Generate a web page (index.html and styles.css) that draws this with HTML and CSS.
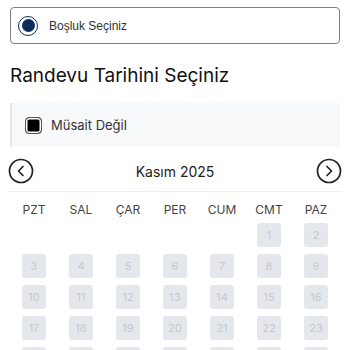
FILE: index.html
```html
<!DOCTYPE html>
<html lang="tr">
<head>
<meta charset="utf-8">
<link rel="stylesheet" href="styles.css">
</head>
<body>
<div class="page">
  <label class="slot-box">
    <span class="radio"><span class="radio-dot"></span></span>
    <span class="slot-text">Boşluk Seçiniz</span>
  </label>
  <h2 class="title">Randevu Tarihini Seçiniz</h2>
  <div class="legend">
    <span class="check"></span>
    <span class="legend-text">Müsait Değil</span>
  </div>
  <div class="cal-head">
    <span class="nav"><svg width="26" height="26" viewBox="0 0 26 26"><circle cx="13" cy="13" r="11.5" fill="none" stroke="#222" stroke-width="1.7"/><path d="M15 8.5 L10.5 13 L15 17.5" fill="none" stroke="#222" stroke-width="1.7" stroke-linecap="round" stroke-linejoin="round"/></svg></span>
    <span class="month">Kasım 2025</span>
    <span class="nav"><svg width="26" height="26" viewBox="0 0 26 26"><circle cx="13" cy="13" r="11.5" fill="none" stroke="#222" stroke-width="1.7"/><path d="M11 8.5 L15.5 13 L11 17.5" fill="none" stroke="#222" stroke-width="1.7" stroke-linecap="round" stroke-linejoin="round"/></svg></span>
  </div>
  <div class="grid">
    <div class="dn">PZT</div><div class="dn">SAL</div><div class="dn">ÇAR</div><div class="dn">PER</div><div class="dn">CUM</div><div class="dn">CMT</div><div class="dn">PAZ</div>
    <div class="cell empty"></div><div class="cell empty"></div><div class="cell empty"></div><div class="cell empty"></div><div class="cell empty"></div>
    <div class="cell"><span class="day">1</span></div><div class="cell"><span class="day">2</span></div>
    <div class="cell"><span class="day">3</span></div><div class="cell"><span class="day">4</span></div><div class="cell"><span class="day">5</span></div><div class="cell"><span class="day">6</span></div><div class="cell"><span class="day">7</span></div><div class="cell"><span class="day">8</span></div><div class="cell"><span class="day">9</span></div>
    <div class="cell"><span class="day">10</span></div><div class="cell"><span class="day">11</span></div><div class="cell"><span class="day">12</span></div><div class="cell"><span class="day">13</span></div><div class="cell"><span class="day">14</span></div><div class="cell"><span class="day">15</span></div><div class="cell"><span class="day">16</span></div>
    <div class="cell"><span class="day">17</span></div><div class="cell"><span class="day">18</span></div><div class="cell"><span class="day">19</span></div><div class="cell"><span class="day">20</span></div><div class="cell"><span class="day">21</span></div><div class="cell"><span class="day">22</span></div><div class="cell"><span class="day">23</span></div>
    <div class="cell"><span class="day">24</span></div><div class="cell"><span class="day">25</span></div><div class="cell"><span class="day">26</span></div><div class="cell"><span class="day">27</span></div><div class="cell"><span class="day">28</span></div><div class="cell"><span class="day">29</span></div><div class="cell"><span class="day">30</span></div>
  </div>
</div>
</body>
</html>
```

FILE: styles.css
```css
html, body {
  margin: 0;
  padding: 0;
  background: #ffffff;
}
.page {
  padding: 7px 10px 0 10px;
  font-family: Inter, "Liberation Sans", sans-serif;
  color: #222;
}
.slot-box {
  display: flex;
  align-items: center;
  height: 37px;
  box-sizing: border-box;
  border: 1px solid #7b8088;
  border-radius: 4px;
  padding-left: 7px;
}
.radio {
  width: 20px;
  height: 20px;
  box-sizing: border-box;
  border: 1.5px solid #0b2e5a;
  border-radius: 50%;
  display: flex;
  align-items: center;
  justify-content: center;
}
.radio-dot {
  width: 13px;
  height: 13px;
  border-radius: 50%;
  background: #0b2e5a;
}
.slot-text {
  margin-left: 11px;
  font-family: "Liberation Sans", Arial, sans-serif;
  font-size: 12px;
  color: #333;
}
.title {
  margin: 20px 0 0 0;
  font-size: 19px;
  font-weight: 400;
  line-height: 24px;
  color: #111;
}
.legend {
  margin-top: 15px;
  height: 44px;
  background: #f8f9fb;
  border-left: 2px solid #e4e6ea;
  display: flex;
  align-items: center;
  padding-left: 13px;
}
.check {
  width: 17px;
  height: 17px;
  box-sizing: border-box;
  border: 1.5px solid #555;
  border-radius: 4px;
  background: #000;
  box-shadow: inset 0 0 0 1.5px #fff;
}
.legend-text {
  margin-left: 9px;
  font-size: 13px;
  color: #333;
}
.cal-head {
  margin-top: 11px;
  display: flex;
  align-items: center;
  justify-content: space-between;
  padding: 0 0 7px 0;
  border-bottom: 1px solid #eceef1;
  margin-left: -2px;
  margin-right: -2px;
}
.nav {
  display: flex;
  width: 26px;
  height: 26px;
}
.month {
  font-size: 14px;
  color: #222;
}
.grid {
  display: grid;
  grid-template-columns: repeat(7, 47px);
  justify-content: center;
  row-gap: 7px;
  margin-top: 12px;
}
.dn {
  text-align: center;
  font-size: 12px;
  color: #444;
  line-height: 12px;
}
.cell {
  display: flex;
  justify-content: center;
}
.cell.empty {
  height: 24px;
}
.day {
  width: 24px;
  height: 24px;
  border-radius: 3px;
  background: #e4e7eb;
  color: #c5c9cf;
  font-size: 11px;
  display: flex;
  align-items: center;
  justify-content: center;
}
```
